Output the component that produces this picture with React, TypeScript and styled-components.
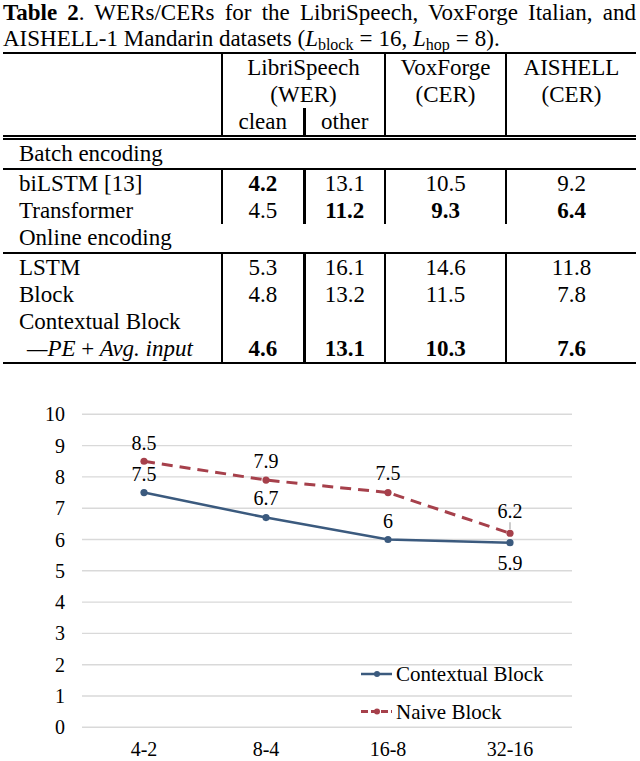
import React from "react";
import styled, { createGlobalStyle } from "styled-components";

const SERIF = `"Liberation Serif", "DejaVu Serif", "Times New Roman", serif`;

const GlobalStyle = createGlobalStyle`
  body {
    margin: 0;
    background: #fff;
    color: #000;
    font-family: ${SERIF};
  }
`;

const Page = styled.div`
  width: 640px;
  padding: 0 4px 0 3px;
  box-sizing: border-box;
  font-family: ${SERIF};
`;

const Caption = styled.div`
  font-size: 23px;
  line-height: 26px;
`;

const CaptionLine = styled.div<{ $justify?: boolean }>`
  text-align: justify;
  text-align-last: ${(p) => (p.$justify ? "justify" : "left")};
`;

const Sub = styled.sub`
  font-size: 16px;
  vertical-align: -4px;
  line-height: 0;
`;

const Eq = styled.span`
  margin: 0 6px;
`;

const Table = styled.table`
  width: 633px;
  border-collapse: collapse;
  table-layout: fixed;
  font-family: ${SERIF};
  font-size: 23px;
  border-top: 2px solid #000;
  border-bottom: 2px solid #000;
`;

const Col = styled.col<{ $w: number }>`
  width: ${(p) => p.$w}px;
`;

type Sep = "none" | "thin" | "thick";

const Cell = styled.td<{ $sep?: Sep; $bold?: boolean; $top?: boolean; $rule?: boolean }>`
  height: 27px;
  padding: 0;
  line-height: 27px;
  text-align: center;
  vertical-align: ${(p) => (p.$top ? "top" : "middle")};
  font-weight: ${(p) => (p.$bold ? 700 : 400)};
  border-right: ${(p) =>
    p.$sep === "thick" ? "3px solid #000" : p.$sep === "none" ? "none" : "2px solid #000"};
  border-bottom: ${(p) => (p.$rule ? "5px double #000" : "none")};
  white-space: nowrap;
`;

const LabelCell = styled(Cell)<{ $indent?: boolean }>`
  text-align: left;
  padding-left: ${(p) => (p.$indent ? 24 : 16)}px;
  font-style: ${(p) => (p.$indent ? "italic" : "normal")};
`;

const SectionCell = styled.td`
  height: 28px;
  padding: 0 0 0 16px;
  line-height: 28px;
  text-align: left;
  border-bottom: 2px solid #000;
`;

const Upright = styled.span`
  font-style: normal;
`;

const ChartSvg = styled.svg`
  display: block;
  margin-left: -3px;
  font-family: ${SERIF};
`;

type Row = { label: string; values: [string, string, string, string]; bold: boolean[] };

const batchRows: Row[] = [
  { label: "biLSTM [13]", values: ["4.2", "13.1", "10.5", "9.2"], bold: [true, false, false, false] },
  { label: "Transformer", values: ["4.5", "11.2", "9.3", "6.4"], bold: [false, true, true, true] },
];

const onlineRows: Row[] = [
  { label: "LSTM", values: ["5.3", "16.1", "14.6", "11.8"], bold: [false, false, false, false] },
  { label: "Block", values: ["4.8", "13.2", "11.5", "7.8"], bold: [false, false, false, false] },
];

const seps: Sep[] = ["thick", "thin", "thin", "none"];

const DataRow = ({ row }: { row: Row }) => (
  <tr>
    <LabelCell $sep="thin">{row.label}</LabelCell>
    {row.values.map((v, i) => (
      <Cell key={i} $sep={seps[i]} $bold={row.bold[i]}>
        {v}
      </Cell>
    ))}
  </tr>
);

// chart geometry (svg top sits right under the table)
const cats = ["4-2", "8-4", "16-8", "32-16"];
const xOf = (i: number) => 144 + 122 * i;
const yOf = (v: number) => 363.3 - 31.3 * v;

const contextual = [7.5, 6.7, 6, 5.9];
const contextualDy = [-19, -20, -19, 20];
const naive = [8.5, 7.9, 7.5, 6.2];
const naiveDy = [-18, -19.5, -20, -22.5];

const BLUE = "#3b5a7e";
const RED = "#a6404b";

const points = (vals: number[]) => vals.map((v, i) => `${xOf(i)},${yOf(v)}`).join(" ");

const Chart = () => (
  <ChartSvg width={640} height={397} viewBox="0 0 640 397">
    {Array.from({ length: 11 }, (_, v) => (
      <g key={v}>
        <line x1={82} x2={572} y1={yOf(v)} y2={yOf(v)} stroke="#d9d9d9" strokeWidth={1.4} />
        <text x={65} y={yOf(v) + 7} fontSize={20} textAnchor="end">
          {v}
        </text>
      </g>
    ))}
    {cats.map((c, i) => (
      <text key={c} x={xOf(i)} y={392} fontSize={20} textAnchor="middle">
        {c}
      </text>
    ))}

    <polyline points={points(naive)} fill="none" stroke={RED} strokeWidth={3} strokeDasharray="11 7" />
    <polyline points={points(contextual)} fill="none" stroke={BLUE} strokeWidth={2.5} />

    {naive.map((v, i) => (
      <circle key={`n${i}`} cx={xOf(i)} cy={yOf(v)} r={3.6} fill={RED} />
    ))}
    {contextual.map((v, i) => (
      <circle key={`c${i}`} cx={xOf(i)} cy={yOf(v)} r={3.6} fill={BLUE} />
    ))}

    <line x1={xOf(3)} x2={xOf(3)} y1={yOf(6.2) - 11} y2={yOf(6.2) - 4} stroke="#999" strokeWidth={1} />

    {naive.map((v, i) => (
      <text key={`nl${i}`} x={xOf(i)} y={yOf(v) + naiveDy[i] + 7} fontSize={20} textAnchor="middle">
        {v}
      </text>
    ))}
    {contextual.map((v, i) => (
      <text key={`cl${i}`} x={xOf(i)} y={yOf(v) + contextualDy[i] + 7} fontSize={20} textAnchor="middle">
        {v}
      </text>
    ))}

    <g>
      <line x1={361} x2={392} y1={310} y2={310} stroke={BLUE} strokeWidth={2.5} />
      <circle cx={377} cy={310} r={3} fill={BLUE} />
      <text x={396} y={317} fontSize={21}>
        Contextual Block
      </text>
      <line x1={361} x2={392} y1={347.5} y2={347.5} stroke={RED} strokeWidth={3} strokeDasharray="7 3" />
      <circle cx={377} cy={347.5} r={3} fill={RED} />
      <text x={396} y={354.5} fontSize={21}>
        Naive Block
      </text>
    </g>
  </ChartSvg>
);

const App = () => {
  return (
    <Page>
      <GlobalStyle />
      <Caption>
        <CaptionLine $justify>
          <b>Table 2</b>. WERs/CERs for the LibriSpeech, VoxForge Italian, and
        </CaptionLine>
        <CaptionLine>
          AISHELL-1 Mandarin datasets (<i>L</i>
          <Sub>block</Sub>
          <Eq>=</Eq>16, <i>L</i>
          <Sub>hop</Sub>
          <Eq>=</Eq>8).
        </CaptionLine>
      </Caption>
      <Table>
        <colgroup>
          <Col $w={219} />
          <Col $w={82} />
          <Col $w={81} />
          <Col $w={121} />
          <Col $w={130} />
        </colgroup>
        <thead>
          <tr>
            <Cell rowSpan={3} $sep="thin" $rule />
            <Cell colSpan={2} $sep="thin">
              LibriSpeech
            </Cell>
            <Cell rowSpan={3} $sep="thin" $top $rule>
              VoxForge
              <br />
              (CER)
            </Cell>
            <Cell rowSpan={3} $sep="none" $top $rule>
              AISHELL
              <br />
              (CER)
            </Cell>
          </tr>
          <tr>
            <Cell colSpan={2} $sep="thin">
              (WER)
            </Cell>
          </tr>
          <tr>
            <Cell $sep="thick" $rule>
              clean
            </Cell>
            <Cell $sep="thin" $rule>
              other
            </Cell>
          </tr>
        </thead>
        <tbody>
          <tr>
            <SectionCell colSpan={5}>Batch encoding</SectionCell>
          </tr>
          {batchRows.map((r) => (
            <DataRow key={r.label} row={r} />
          ))}
          <tr>
            <SectionCell colSpan={5}>Online encoding</SectionCell>
          </tr>
          {onlineRows.map((r) => (
            <DataRow key={r.label} row={r} />
          ))}
          <tr>
            <LabelCell $sep="thin">Contextual Block</LabelCell>
            <Cell $sep="thick" />
            <Cell $sep="thin" />
            <Cell $sep="thin" />
            <Cell $sep="none" />
          </tr>
          <tr>
            <LabelCell $sep="thin" $indent>
              —PE <Upright>+</Upright> Avg. input
            </LabelCell>
            <Cell $sep="thick" $bold>
              4.6
            </Cell>
            <Cell $sep="thin" $bold>
              13.1
            </Cell>
            <Cell $sep="thin" $bold>
              10.3
            </Cell>
            <Cell $sep="none" $bold>
              7.6
            </Cell>
          </tr>
        </tbody>
      </Table>
      <Chart />
    </Page>
  );
};

export default App;
